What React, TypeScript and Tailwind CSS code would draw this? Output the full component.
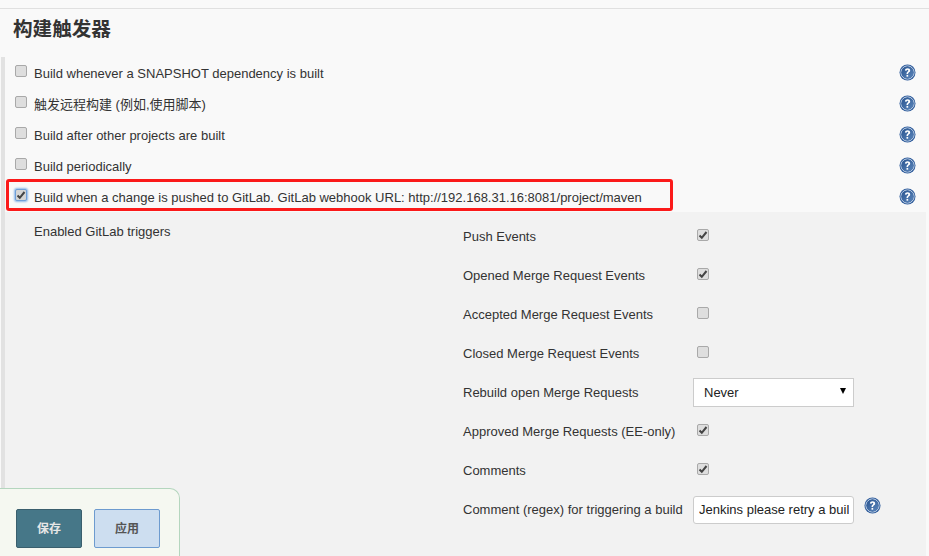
import { ReactNode } from "react";

const FONT = "font-['Liberation_Sans','Noto_Sans_CJK_SC',sans-serif]";

function HelpIcon() {
  return (
    <svg width="17" height="17" viewBox="0 0 17 17" className="block">
      <defs>
        <linearGradient id="helpFill" x1="0" y1="0" x2="1" y2="1">
          <stop offset="0" stopColor="#2a5590" />
          <stop offset="1" stopColor="#5c86bb" />
        </linearGradient>
      </defs>
      <circle cx="8.5" cy="8.5" r="8" fill="#2f5c9b" />
      <circle cx="8.5" cy="8.5" r="6.6" fill="none" stroke="#d6e2f0" strokeWidth="0.9" />
      <circle cx="8.5" cy="8.5" r="6" fill="url(#helpFill)" />
      <path
        d="M5.9 6.6c.1-1.5 1.2-2.3 2.7-2.3 1.5 0 2.6.9 2.6 2.1 0 1-.6 1.5-1.3 2-.6.4-.8.7-.8 1.3v.3H7.5v-.5c0-.9.4-1.400 1-1.800.5-.4.800-.6.800-1.100 0-.5-.3-.8-.8-.8-.6 0-.9.4-.9 1z"
        fill="#ffffff"
      />
      <rect x="7.500" y="10.900" width="1.700" height="1.800" fill="#ffffff" />
    </svg>
  );
}

function Checkbox({ checked = false, focused = false }: { checked?: boolean; focused?: boolean }) {
  return (
    <span
      className={`flex h-[12px] w-[12px] shrink-0 items-center justify-center rounded-[2px] border ${
        focused
          ? "border-[#6f9fd8] bg-[#d5d5d5] shadow-[0_0_2px_1px_#8fb8e8]"
          : "border-[#a9a9a9] bg-[#dedede]"
      }`}
    >
      {checked && (
        <svg width="10" height="10" viewBox="0 0 10 10">
          <path d="M1.500 5.500 L3.800 7.800 L8.500 2" fill="none" stroke="#444444" strokeWidth="2" />
        </svg>
      )}
    </span>
  );
}

function TriggerRow({ label, checked, focused }: { label: string; checked?: boolean; focused?: boolean }) {
  return (
    <div className="flex h-[31px] items-center pl-[10px] pr-[13px]">
      <span className="mb-[3px] w-[19px]">
        <Checkbox checked={checked} focused={focused} />
      </span>
      <span className="pt-[2px] text-[13px] text-[#333333]">{label}</span>
      <span className="ml-auto">
        <HelpIcon />
      </span>
    </div>
  );
}

function FieldRow({ label, children }: { label: string; children: ReactNode }) {
  return (
    <div className="flex h-[39px] items-center">
      <span className="w-[230px] text-[13px] text-[#333333]">{label}</span>
      {children}
    </div>
  );
}

function Tick({ checked }: { checked?: boolean }) {
  return (
    <span className="mb-[3px] ml-[4px]">
      <Checkbox checked={checked} />
    </span>
  );
}

export default function App() {
  return (
    <div className={`${FONT} relative h-[556px] w-[929px] overflow-hidden bg-[#f9f9f9]`}>
      <div className="pt-[8px]">
        <div className="border-t border-[#e0e0e0] pl-[13px] pt-[8px]">
          <h2 className="h-[40px] text-[19.600px] font-bold leading-[24px] text-[#333333]">构建触发器</h2>
        </div>

        <div className="ml-[1px] border-l-[4px] border-[#e2e2e2]">
          <TriggerRow label="Build whenever a SNAPSHOT dependency is built" />
          <TriggerRow label="触发远程构建 (例如,使用脚本)" />
          <TriggerRow label="Build after other projects are built" />
          <TriggerRow label="Build periodically" />
          <TriggerRow
            label="Build when a change is pushed to GitLab. GitLab webhook URL: http://192.168.31.16:8081/project/maven"
            checked
            focused
          />

          {/* GitLab trigger options */}
          <div className="mr-[3px] flex h-[345px] bg-[#f2f2f2] pl-[29px] pt-[5px]">
            <div className="w-[429px] pt-[7px] text-[13px] leading-[16px] text-[#333333]">Enabled GitLab triggers</div>
            <div>
              <FieldRow label="Push Events">
                <Tick checked />
              </FieldRow>
              <FieldRow label="Opened Merge Request Events">
                <Tick checked />
              </FieldRow>
              <FieldRow label="Accepted Merge Request Events">
                <Tick />
              </FieldRow>
              <FieldRow label="Closed Merge Request Events">
                <Tick />
              </FieldRow>
              <FieldRow label="Rebuild open Merge Requests">
                <div className="relative flex h-[29px] w-[161px] items-center border border-[#cccccc] bg-white pl-[10px] text-[13px] text-[#222222]">
                  Never
                  <span className="absolute right-[7px] top-[9px] h-0 w-0 border-x-[3.500px] border-t-[6px] border-x-transparent border-t-black" />
                </div>
              </FieldRow>
              <FieldRow label="Approved Merge Requests (EE-only)">
                <Tick checked />
              </FieldRow>
              <FieldRow label="Comments">
                <Tick checked />
              </FieldRow>
              <FieldRow label="Comment (regex) for triggering a build">
                <div className="h-[28px] w-[161px] rounded-[3px] border border-[#cccccc] bg-white pl-[5px] pr-[4px] text-[13px] leading-[26px] text-[#222222]">
                  <div className="overflow-hidden whitespace-nowrap">Jenkins please retry a build</div>
                </div>
                <span className="mb-[8px] ml-[10px]">
                  <HelpIcon />
                </span>
              </FieldRow>
            </div>
          </div>
        </div>
      </div>

      {/* annotation drawn over the screenshot */}
      <div className="pointer-events-none absolute left-[6px] top-[179px] h-[32px] w-[667px] rounded-[3px] border-[3px] border-[#fb1a1a]" />

      {/* floating save bar */}
      <div className="absolute bottom-0 left-0 flex h-[68px] w-[180px] items-start gap-[12px] rounded-tr-[10px] border-r border-t border-[#b4d6be] bg-[#f5f8f1] pl-[16px] pt-[20px]">
        <button className="h-[39px] w-[66px] rounded-[2px] border border-[#3a5f6d] bg-[#467788] text-[12px] font-bold text-[#e6e6e6]">
          保存
        </button>
        <button className="h-[39px] w-[66px] rounded-[2px] border border-[#6d9bcf] bg-[#cddef0] text-[12px] font-bold text-[#555555]">
          应用
        </button>
      </div>
    </div>
  );
}
